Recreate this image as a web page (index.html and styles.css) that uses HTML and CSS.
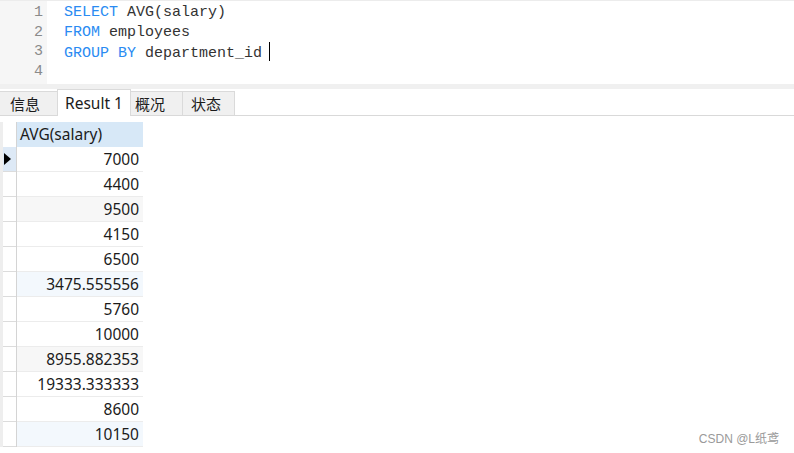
FILE: index.html
```html
<!DOCTYPE html>
<html lang="zh-CN">
  <head>
    <meta charset="UTF-8" />
    <title>Result 1</title>
    <link rel="stylesheet" href="styles.css">
  </head>
  <body>
    <div class="editor">
      <div class="gutter">
        <div>1</div>
        <div>2</div>
        <div>3</div>
        <div>4</div>
      </div>
      <div class="code">
        <div><span class="kw">SELECT</span> AVG(salary)</div>
        <div><span class="kw">FROM</span> employees</div>
        <div><span class="kw">GROUP BY</span> department_id <span class="caret"></span></div>
        <div>&nbsp;</div>
      </div>
    </div>
    <div class="split"></div>
    <div class="tabs">
      <div class="tab">信息</div>
      <div class="tab active">Result 1</div>
      <div class="tab">概况</div>
      <div class="tab">状态</div>
    </div>
    <div class="grid">
      <div class="rowhead">
        <div class="rh top"></div>
        <div class="rh sel"><span class="arrow"></span></div>
        <div class="rh"></div>
        <div class="rh"></div>
        <div class="rh"></div>
        <div class="rh"></div>
        <div class="rh"></div>
        <div class="rh"></div>
        <div class="rh"></div>
        <div class="rh"></div>
        <div class="rh"></div>
        <div class="rh"></div>
        <div class="rh"></div>
      </div>
      <div class="col">
        <div class="th">AVG(salary)</div>
        <div class="td">7000</div>
        <div class="td">4400</div>
        <div class="td gray">9500</div>
        <div class="td">4150</div>
        <div class="td">6500</div>
        <div class="td blue">3475.555556</div>
        <div class="td">5760</div>
        <div class="td">10000</div>
        <div class="td gray">8955.882353</div>
        <div class="td">19333.333333</div>
        <div class="td">8600</div>
        <div class="td blue">10150</div>
      </div>
    </div>
    <div class="mark">CSDN @L纸鸢</div>
  </body>
</html>
```

FILE: styles.css
```css
body {
  margin: 0;
  padding: 0;
  background: #fff;
  font-family: "Noto Sans", "Noto Sans CJK SC", sans-serif;
  color: #1b1b1b;
  position: relative;
  width: 794px;
  height: 453px;
  overflow: hidden;
  white-space: nowrap;
}

.editor {
  display: flex;
  border-top: 1px solid #ececec;
  height: 83px;
  font-family: "Liberation Mono", monospace;
  font-size: 15px;
  line-height: 19.7px;
}

.gutter {
  width: 47px;
  background: #f6f6f6;
  box-sizing: border-box;
  padding: 2px 3px 0 0;
  text-align: right;
  color: #8a8a8a;
}

.gutter div {
  padding-right: 1px;
}

.code {
  padding: 2px 0 0 17px;
  color: #333;
}

.kw {
  color: #2a8bf2;
}

.caret {
  display: inline-block;
  width: 1px;
  height: 19px;
  background: #000;
  vertical-align: -4px;
  margin-left: -2px;
}

.split {
  height: 5px;
  background: #f0f0f0;
}

.tabs {
  display: flex;
  align-items: flex-end;
  height: 26px;
  border-bottom: 1px solid #d9d9d9;
  font-size: 15px;
}

.tab {
  height: 24px;
  line-height: 24px;
  box-sizing: border-box;
  background: #f0f0f0;
  border: 1px solid #dadada;
  border-bottom: none;
  margin-right: -1px;
}

.tab:first-child {
  width: 58px;
  border-left: none;
  padding-left: 10px;
}

.tab.active {
  background: #fff;
  height: 27px;
  line-height: 26px;
  width: 74px;
  padding-left: 7px;
  margin-bottom: -1px;
  position: relative;
  font-size: 15.5px;
}

.tab:nth-child(3) {
  width: 53px;
  padding-left: 4px;
}

.tab:nth-child(4) {
  width: 53px;
  padding-left: 8px;
}

.grid {
  display: flex;
  margin-top: 6px;
  font-size: 15.5px;
}

.rowhead {
  width: 17px;
  box-sizing: border-box;
  border-left: 3px solid #eeeeee;
  border-right: 1px solid #d4d4d4;
}

.rh {
  height: 25px;
  box-sizing: border-box;
  border-bottom: 1px solid #dcdcdc;
  display: flex;
  align-items: center;
  justify-content: center;
}

.rh.top {
  border-bottom: none;
}

.rh.sel {
  background: #dde9f6;
}

.arrow {
  width: 0;
  height: 0;
  border-top: 6px solid transparent;
  border-bottom: 6px solid transparent;
  border-left: 7px solid #000;
  margin-left: -5px;
}

.col {
  width: 126px;
}

.th {
  height: 25px;
  line-height: 25px;
  background: #d7e8f7;
  padding-left: 3px;
  box-sizing: border-box;
}

.td {
  height: 25px;
  line-height: 24px;
  box-sizing: border-box;
  border-bottom: 1px solid #ececec;
  text-align: right;
  padding-right: 4px;
}

.td.gray {
  background: #f7f7f7;
}

.td.blue {
  background: #f3f8fd;
}

.mark {
  position: absolute;
  right: 15px;
  bottom: 7px;
  font-size: 12px;
  color: #9a9a9a;
  font-family: "Liberation Sans", "Noto Sans CJK SC", sans-serif;
}
```
